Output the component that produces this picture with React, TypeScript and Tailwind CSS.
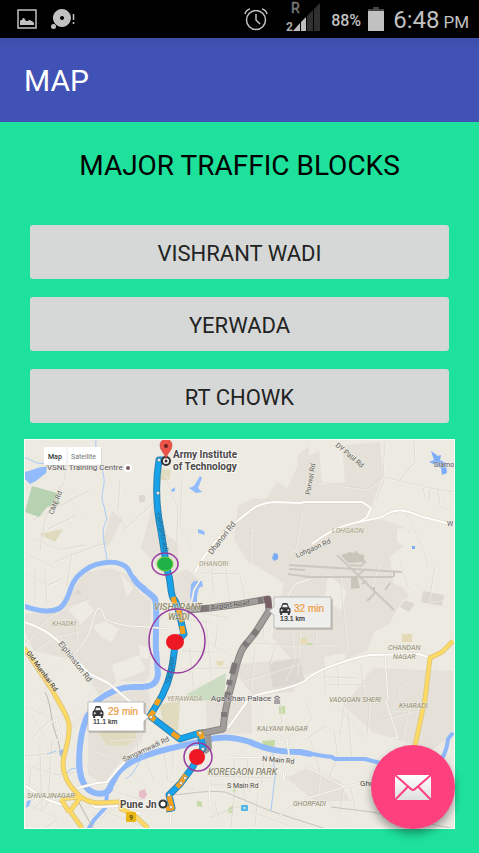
type Label = { text: string; x: number; y: number; size: number; fill?: string; rotate?: number; italic?: boolean; bold?: boolean };

const AREA = "#a09a80";
const ROAD = "#5c5c5a";

const labels: Label[] = [
  { text: "VSNL Training Centre", x: 47, y: 470, size: 8, fill: "#5b5660" },
  { text: "CME Rd", x: 53, y: 515, size: 7, fill: ROAD, rotate: -68 },
  { text: "Porwal Rd", x: 310, y: 495, size: 7, fill: ROAD, rotate: -80 },
  { text: "DY Patil Rd", x: 335, y: 446, size: 7, fill: ROAD, rotate: 40 },
  { text: "Diamo", x: 434, y: 467, size: 7, fill: "#555563" },
  { text: "Dhanori Rd", x: 212, y: 555, size: 8, fill: ROAD, rotate: -52 },
  { text: "DHANORI", x: 199, y: 566, size: 7, fill: AREA, italic: true },
  { text: "LOHGAON", x: 332, y: 533, size: 7, fill: AREA, italic: true },
  { text: "Lohgaon Rd", x: 297, y: 558, size: 7, fill: ROAD, rotate: -24 },
  { text: "W", x: 447, y: 526, size: 7, fill: ROAD },
  { text: "KHADKI", x: 52, y: 626, size: 7, fill: AREA, italic: true },
  { text: "Elphinston Rd", x: 58, y: 644, size: 8, fill: ROAD, rotate: 52 },
  { text: "Old Mumbai Rd", x: 26, y: 653, size: 7, fill: "#534a31", rotate: 54, bold: true },
  { text: "VISHARANT", x: 154, y: 610, size: 9, fill: "#8f8a6a", italic: true, bold: true },
  { text: "WADI", x: 168, y: 620, size: 9, fill: "#8f8a6a", italic: true, bold: true },
  { text: "YERAWADA", x: 167, y: 701, size: 7, fill: AREA, italic: true },
  { text: "Aga Khan Palace", x: 211, y: 701, size: 8, fill: "#56535c" },
  { text: "CHANDAN", x: 388, y: 650, size: 7, fill: "#8b876e", italic: true },
  { text: "NAGAR", x: 393, y: 659, size: 7, fill: "#8b876e", italic: true },
  { text: "VADGOAN SHERI", x: 329, y: 702, size: 7, fill: "#8b876e", italic: true },
  { text: "KHARADI", x: 399, y: 708, size: 7, fill: "#8b876e", italic: true },
  { text: "KALYANI NAGAR", x: 257, y: 731, size: 7, fill: "#8b876e", italic: true },
  { text: "Sangamwadi Rd", x: 124, y: 762, size: 7, fill: ROAD, rotate: -25 },
  { text: "KOREGAON PARK", x: 208, y: 775, size: 9, fill: "#77735b", italic: true },
  { text: "N Main Rd", x: 262, y: 761, size: 7, fill: "#4c4b49", rotate: 5 },
  { text: "S Main Rd", x: 227, y: 788, size: 7, fill: "#4c4b49" },
  { text: "SHIVAJINAGAR", x: 27, y: 798, size: 7, fill: "#8b876e", italic: true },
  { text: "GHORPADI", x: 293, y: 806, size: 7, fill: "#8b876e", italic: true },
  { text: "Ghorpadi", x: 360, y: 786, size: 8, fill: "#4c4b49" },
];

const mainRoute =
  "M166 460L159 460C156 478 156 500 159 520C163 540 165 560 168 573C171 580 170 592 173 598C178 603 180 618 184 634L175 644C173 664 171 678 162 696L150 716L180 739L200 733L203 748L192 768L180 784L169 795L172 808L166 809";
const slowParts = [
  "M173 597L175 604",
  "M178 608L182 622M182 626L183 634",
  "M156 705L159 699",
  "M154 711L150 716L155 720",
  "M172 733L179 738",
  "M197 734L201 733L202 739",
  "M186 775L180 784L177 787",
  "M169 796L172 808L166 809",
];
const altRoute =
  "M187 610L210 608L240 604L268 599L269 611L255 633L243 648C236 660 235 675 231 687C228 698 225 708 223 729L203 733";

const whiteRoads = [
  "M24 622C45 629 55 636 70 654L90 674L108 683C120 692 126 700 138 707L142 717",
  "M195 572C202 557 222 531 240 519C251 510 257 503 275 502L300 503L305 502L362 502L371 508L367 517L359 522C337 526 324 535 312 544",
  "M359 522L382 517C395 507 406 510 420 516L453 525",
  "M305 681C312 672 346 659 370 655L419 654L430 658",
  "M305 681C285 693 253 690 246 703L228 728",
  "M24 785L48 800L65 806M78 788L97 783L107 782L116 771L128 758L160 745",
  "M80 796L95 807L120 806L140 814",
];

const sideRoads = [
  "M38 680C50 668 72 660 84 642C93 630 92 616 98 608L102 610L105 619C120 627 135 626 148 627L170 629",
  "M385 656L388 700",
  "M330 704C350 712 354 727 365 738L398 738L386 701",
  "M52 722L80 708L94 690M71 728L90 707M56 719L60 738L53 744",
  "M203 757L211 758L290 757M285 759L283 780",
  "M208 760L210 807L225 826M170 812L171 828",
  "M276 819L300 800L318 795L345 787L360 783M305 766L344 787",
  "M258 698L261 729L287 740L295 732M287 740L290 763L277 798",
  "M190 609L194 590L200 580L215 575",
  "M287 598L295 584L310 579",
  "M95 827L120 801",
];

const minorRoads = [
  "M66 450L65 480L45 520L40 550M35 540L60 550L85 545M33 520L90 490M58 486L84 515M48 529L75 516M24 553L55 568",
  "M24 574L48 585L62 579M35 569L35 604M45 569L47 604M72 553L67 586M54 562L98 545L107 544",
  "M124 530L154 502L160 507M120 480L118 510L126 530",
  "M24 644L45 619L67 606L88 599M35 625L58 651M43 620L72 653M24 657L55 636L82 630",
  "M24 679L43 701L58 709M36 654L49 672L46 690M77 639L75 622",
  "M27 708L52 718L32 738M24 724L49 747M32 715L45 737M39 707L58 732M25 756L58 753M28 766L62 777M40 747L42 810M52 741L48 805",
  "M24 803L58 819L45 828M30 811L50 795M42 812L54 794",
  "M165 474L178 508L177 545M182 478L180 525L192 548M250 565L251 528L295 550L302 510",
  "M305 480L350 487L367 489L385 476M385 442L383 477L430 488L453 492M385 477L376 502",
  "M405 510L424 550L429 569M400 480L415 462L414 440M430 488L429 500M438 490L440 506L450 511M423 488L425 497",
  "M200 573L240 574L245 598M212 569L214 595M226 570L230 597M184 620L210 623M180 609L228 618",
  "M182 651L214 653M180 669L230 668M206 620L212 678M190 648L194 691M218 625L215 646M205 642L233 656",
  "M257 637L275 648L270 664M255 650L250 690M241 681L300 663M263 610L264 638M251 643L303 646",
  "M291 628L294 660L285 680M300 628L297 675M316 628L315 645L335 644M340 575L347 650",
  "M337 660L339 685M324 662L326 693M323 677L357 678M325 685L365 685M361 664L364 698",
  "M345 700L340 737M370 695L367 735M388 710L408 710L401 742M398 690L397 700M385 674L412 684",
  "M430 658L453 691M380 720L417 710M310 738L320 770L318 790M334 730L338 757L330 775L333 790M348 713L352 759",
  "M305 740L325 726L340 734M306 700L312 718L305 728M280 698L282 724M250 700L250 725",
  "M173 753L173 770M164 751L168 781L194 790M208 776L270 778M234 757L235 789M247 757L250 792M264 759L262 784",
  "M211 785L243 785L248 812M215 803L220 821M235 789L231 828M258 793L255 826M210 818L237 807L290 826",
  "M283 774L333 806L350 827M344 787L340 812M350 784L357 817M380 560L370 590M435 566L429 601L443 600M401 563L409 590",
  "M110 740L137 738L138 750M87 765L98 778M95 751L112 755M145 758L154 780",
  "M55 775L82 772M31 770L28 796M94 812L98 825M105 812L144 827M109 790L145 801M124 770L155 794",
];

const rivers = [
  { d: "M24 606C35 610 49 614 60 608C71 599 68 586 78 576C85 569 94 564 103 563C116 561 123 563 128 569C132 578 137 584 144 588", w: 5 },
  { d: "M134 579C138 587 151 593 155 599C158 610 155 630 156 650L158 674C157 688 145 687 133 687C118 687 106 694 97 701C87 712 82 726 80 746C78 765 79 778 86 787C92 795 105 796 110 789", w: 6 },
  { d: "M108 791L117 774C127 761 144 756 160 751C177 747 188 744 203 741C222 735 237 738 250 742C265 749 277 752 300 752L310 754", w: 6 },
  { d: "M300 752L324 756L332 757L335 759L365 759L380 763C399 769 419 776 433 769C444 760 447 750 448 739L452 734", w: 4 },
];

const streams = [
  "M24 457L37 463L48 464L56 459",
  "M96 440C94 453 102 464 104 478C105 490 99 495 104 506L107 520C99 530 106 548 107 560",
  "M144 755L132 774L126 779M56 751L47 754M64 775L71 769L76 768",
  "M273 754L275 777L271 810",
];

const yellowRoads = [
  "M24 648L53 691C57 701 68 714 69 725C70 741 64 751 63 763C63 779 72 789 81 797C94 807 105 801 121 802L121 809L133 814L148 828",
  "M81 797L70 811L82 828M61 799L69 812M61 799L80 797M453 641L442 652L430 658L425 699L415 746",
];

function Car({ x, y }: { x: number; y: number }) {
  return (
    <g transform={`translate(${x} ${y})`}>
      <path d="M2 4.5L3.2 1Q3.5 0 4.5 0H7.5Q8.5 0 8.8 1L10 4.5Q11.5 4.7 11.5 6.5V10H10.8V12H8.8V10H3.2V12H1.2V10H.5V6.5Q.5 4.7 2 4.5Z" fill="#38383a" />
      <path d="M3.3 4.3L4 1.7H8L8.7 4.3Z" fill="#eee" />
      <circle cx="2.8" cy="7.3" r="1" fill="#eee" />
      <circle cx="9.2" cy="7.3" r="1" fill="#eee" />
    </g>
  );
}

function TrafficMap() {
  return (
    <svg viewBox="24 439 431 390" className="block w-full" role="img" aria-label="Traffic map of Pune" fontFamily="Roboto, sans-serif">
      <rect x="24" y="439" width="431" height="390" fill="#edeae2" />
      <g fill="#e5e1d9">
        <path d="M58 611L73 590L84 573L110 568L127 575L139 592L151 601L150 674L145 682L118 681L99 695L78 661L34 651L24 630V614Z" />
        <path d="M238 506L251 499L267 498L277 481L287 489L296 469L310 455L332 446L380 442L383 476L367 518L388 521L410 530L407 544L390 556L393 582L400 604L389 624L374 632L367 651L305 675L272 637L284 583L247 560L234 540Z" />
        <path d="M298 455L309 446V480L295 500Z M112 510L122 520L108 547L102 543Z M154 500L168 536L178 543L179 567L166 577L141 548Z" />
        <path d="M169 576L187 569L199 580L192 607L176 604Z M229 665L297 658L294 692L252 694Z" />
        <path d="M100 698L149 687L150 713L141 742L117 765L103 785L88 774L88 732Z" />
        <path d="M206 701L252 700L252 733L207 735Z M373 668L453 671V735L432 750L373 732L344 706Z" />
        <path d="M305 769L340 781L350 801L316 801L286 778Z M390 582L402 587L409 596L397 607L389 598Z" />
      </g>
      <g fill="#eeebe3">
        <path d="M319 446H342L345 482L322 484Z M328 575L347 591L341 610L324 601Z M402 599L410 603L403 612Z M93 626L105 621L119 629L112 642L101 637Z M139 644L150 648L148 659L140 657Z M397 529L408 528L411 550L397 542Z M324 657L345 653L345 677L326 681Z" />
        <path d="M68 609L86 601L94 611L81 624Z M120 573L134 588L127 597Z M112 665L139 655L146 670L116 682Z M306 717L318 724L309 733L329 733L333 745L322 749L306 743Z" />
      </g>
      <g fill="#dcd7d0">
        <path d="M269 663L300 658L305 682L273 688Z M405 600L415 604L409 612L400 607Z M423 591L444 595L442 606L421 602Z M139 495L145 495V502L139 502Z M76 590L81 590V595L76 595Z" />
      </g>
      <path d="M32 486L57 493L60 504L47 507L39 517L25 512Z" fill="#b7d2b1" />
      <path d="M187 694L226 673L224 701L190 700Z" fill="#cbdcc2" />
      <path d="M39 534L63 529L55 542Z M99 734L107 725L134 728L137 739L125 746L107 745Z M160 704L180 701L178 731L163 728Z M159 469L171 470L169 480H158Z" fill="#e0dabf" />
      <path d="M307 643L313 643L312 645L307 645Z M279 706H285V714H279Z M262 741L275 740L274 748L265 748Z M197 801L202 802V807L197 806Z M228 809L233 805V813H228Z M232 791L236 788V793Z" fill="#c5d9a4" />
      <path d="M402 634H412V642H402Z M216 661L224 661L222 666L217 665Z M300 638L307 637V644H300Z" fill="#e4dab6" />
      <path d="M139 791L145 789L147 795L144 799L139 797Z" fill="#e5bec9" />

      <g fill="none" stroke="#dcd8d0" strokeWidth="1" strokeOpacity=".8">
        {minorRoads.map((d) => <path key={d} d={d} />)}
      </g>
      <g fill="none" stroke="#f6f4ee" strokeWidth="1" strokeOpacity=".5">
        {minorRoads.map((d) => <path key={d} d={d} transform="translate(1 1)" />)}
      </g>

      <g fill="none" stroke="#cdc8bf" strokeWidth="2">
        <path d="M289 565L402 572M305 577L393 577M289 569L305 570M288 574L310 577M337 555L394 610M365 569L353 580M394 572V577" />
        <path d="M344 556L350 560L356 552L365 562L361 566L350 565M362 584L367 581M367 601L374 594L374 587M385 590L390 583" />
      </g>
      <path d="M341 555L350 552L364 555V562L348 563Z M351 577L357 576L360 588L351 589Z" fill="#cac5bb" />

      <g fill="none" strokeLinejoin="round" strokeLinecap="round">
        {rivers.map((r) => <path key={r.d} d={r.d} stroke="#8eb8fa" strokeWidth={r.w} />)}
        {streams.map((d) => <path key={d} d={d} stroke="#a9caf5" strokeWidth="1" />)}
        <path d="M107 792L106 807L94 820L89 828" stroke="#8eb8fa" strokeWidth="4" />
      </g>
      <g fill="#91bbfc">
        <path d="M24 472C34 471 37 466 47 467L46 473L36 481L30 484L24 478Z" />
        <path d="M189 488L194 486L200 476L202 478L198 488L202 492L196 493Z M171 490L175 487L175 491L172 492Z M198 529L204 531L205 535L198 533Z" />
        <path d="M190 597L191 584L194 581L202 581L203 586L199 588L197 596L197 602L191 602Z" />
        <path d="M431 451L438 456L441 455L440 460L446 463L447 473L442 475L441 468L436 465L429 462L434 460Z M412 546H415V549H412Z M274 553L278 554V559L274 561L272 558Z" fill="#7bacf7" />
        <path d="M59 751L63 749L66 753L60 756Z M27 801L31 800L29 806L26 808Z" />
      </g>

      <g fill="none" strokeLinejoin="round">
        <path d="M45 692C52 704 50 723 58 740L64 770L73 792L93 828" stroke="#bbb8b1" strokeWidth="1" />
        <path d="M170 795C192 794 203 790 225 792L268 810L326 829M331 807L372 812L455 829" stroke="#c6c3bc" strokeWidth="1" />
        {sideRoads.map((d) => <path key={d} d={d} stroke="#dedad2" strokeWidth="2" />)}
        {sideRoads.map((d) => <path key={d} d={d} stroke="#fbfaf6" strokeWidth="1" />)}
        {whiteRoads.map((d) => <path key={d} d={d} stroke="#dad6ce" strokeWidth="3" />)}
        {whiteRoads.map((d) => <path key={d} d={d} stroke="#fffefa" strokeWidth="2" />)}
        {yellowRoads.map((d) => <path key={d} d={d} stroke="#e2c878" strokeWidth="5" />)}
        {yellowRoads.map((d) => <path key={d} d={d} stroke="#ffdb63" strokeWidth="3" />)}
      </g>

      <g fill="none" strokeLinejoin="round">
        <path d="M201 732L208 733L209 748L204 752" stroke="#9b9998" strokeWidth="6" />
        <path d={altRoute} stroke="#878482" strokeWidth="7" />
        <path d={altRoute} stroke="#a09d9b" strokeWidth="5" />
        <path d="M200 609L209 608M258 601L263 600M257 630L253 635M247 642L244 646M235 663L232 674M230 680L229 685M228 692L227 698M224 712L224 717" stroke="#7f7a79" strokeWidth="6" />
        <path d="M264 600L268 599L269 608" stroke="#786065" strokeWidth="6" />
        <path d={mainRoute} stroke="#2a80b0" strokeWidth="7" />
        <path d={mainRoute} stroke="#17a2ea" strokeWidth="5" />
        {slowParts.map((d) => <path key={d} d={d} stroke="#f6a01c" strokeWidth="5" />)}
      </g>
      <g fill="#fff" stroke="#7f7961" strokeWidth=".5">
        <circle cx="159" cy="460" r="1.5" /><circle cx="158" cy="493" r="1.5" /><circle cx="151" cy="717" r="1.5" />
        <circle cx="200" cy="733" r="1.5" /><circle cx="203" cy="749" r="1.5" /><circle cx="185" cy="778" r="1.5" />
        <circle cx="181" cy="783" r="1.5" /><circle cx="169" cy="795" r="1.5" /><circle cx="171" cy="807" r="1.5" />
      </g>

      <rect x="126" y="812" width="10" height="10" rx="1" fill="#e9b714" />
      <text x="131" y="820" fontSize="7" fontWeight="700" textAnchor="middle" fill="#5c4a10">9</text>
      <rect x="241" y="805" width="7" height="6" rx="1" fill="#51b6e5" />
      <path d="M243 808H246" stroke="#fff" />

      <g stroke="#f4f1e8" strokeWidth="1" strokeOpacity=".7" paintOrder="stroke">
        {labels.map((l) => (
          <text
            key={l.text}
            x={l.x}
            y={l.y}
            fontSize={l.size}
            fill={l.fill}
            fontStyle={l.italic ? "italic" : undefined}
            fontWeight={l.bold ? 500 : undefined}
            transform={l.rotate ? `rotate(${l.rotate} ${l.x} ${l.y})` : undefined}
          >
            {l.text}
          </text>
        ))}
        <text x="211" y="610" fontSize="7" fill="#444" strokeOpacity=".4" transform="rotate(-8 211 610)">Airport Road</text>
      </g>
      <g fontSize="7" fill="#2f6584">
        <text x="156" y="512" transform="rotate(79 156 512)">Vishrantwadi</text>
        <text x="170" y="684" transform="rotate(-79 170 684)">Vadgaon</text>
      </g>
      <path d="M274 698L277 696L280 698M275 699H279M275 700V702M277 700V702M279 700V702M274 703H280" fill="none" stroke="#665d68" strokeWidth="1" />
      <circle cx="128" cy="468" r="4" fill="#fff" />
      <circle cx="128" cy="468" r="2" fill="#7d5e5c" />

      <g>
        <rect x="45" y="448" width="57" height="18" fill="#c9c5bd" opacity=".4" />
        <rect x="44" y="447" width="57" height="18" rx="1" fill="#fff" />
        <path d="M67 447V465" stroke="#e5e5e5" />
        <text x="48" y="459" fontSize="7" fontWeight="500" fill="#333">Map</text>
        <text x="71" y="459" fontSize="7" fill="#777">Satellite</text>
      </g>

      <circle cx="166" cy="461" r="4" fill="#fff" stroke="#343434" strokeWidth="2" />
      <circle cx="166" cy="461" r="1.5" fill="#343434" />
      <path d="M166 459C165 453 160 451 160 445A6 6 0 0 1 172 445C172 451 167 453 166 459Z" fill="#ed5449" stroke="#b83834" strokeWidth=".5" />
      <circle cx="166" cy="446" r="2" fill="#682222" />
      <g stroke="#fff" strokeWidth="2" strokeOpacity=".7" paintOrder="stroke" fill="#4b4949" fontSize="10" fontWeight="700">
        <text x="173" y="458">Army Institute</text>
        <text x="173" y="470">of Technology</text>
        <text x="120" y="808">Pune Jn</text>
      </g>
      <circle cx="163" cy="804" r="3.5" fill="#fff" stroke="#333" strokeWidth="2" />

      <g fill="none" stroke="#983ba0" strokeWidth="1.5">
        <ellipse cx="165" cy="564" rx="13" ry="11" />
        <ellipse cx="177" cy="641" rx="28" ry="32" />
        <circle cx="198" cy="757" r="14" />
      </g>
      <ellipse cx="165" cy="564" rx="8" ry="7" fill="#20b247" stroke="#77cb36" />
      <ellipse cx="175" cy="642" rx="9" ry="8" fill="#ee1824" />
      <circle cx="197" cy="757" r="8" fill="#ee1824" />

      <path d="M276 599H333V630H276Z M89 703H146V733H89Z" fill="#77736d" opacity=".3" />
      <path d="M274 597H331V628H274V615L269 611L274 607Z" fill="#eeeeed" stroke="#aaa8a4" strokeWidth=".7" />
      <path d="M88 702H144V713L149 717L144 721V731H88Z" fill="#fff" stroke="#aaa8a4" strokeWidth=".7" />
      <Car x={279} y={603} />
      <Car x={92} y={706} />
      <g fontSize="10" fill="#ed9b3e" stroke="#ed9b3e" strokeWidth=".2" fontFamily="Liberation Sans, sans-serif">
        <text x="294" y="612">32 min</text>
        <text x="108" y="715">29 min</text>
      </g>
      <g fontSize="7" fill="#333" stroke="#333" strokeWidth=".2" fontFamily="Liberation Sans, sans-serif">
        <text x="280" y="621">13.1 km</text>
        <text x="93" y="724">11.1 km</text>
      </g>
      <rect x="24.5" y="439.5" width="430" height="389" fill="none" stroke="#fbfaf6" />
    </svg>
  );
}

function StatusBar() {
  return (
    <header className="flex h-[38px] items-center justify-between bg-black pr-[10px] pl-[17px] text-[#c1c1c1]">
      <div className="flex items-center gap-[14px]">
        <svg width="20" height="20" viewBox="0 0 20 20" aria-label="Screenshot saved">
          <rect x="1" y="1" width="18" height="18" fill="none" stroke="currentColor" strokeWidth="1.5" />
          <path d="M3 16V12L4 11L5 11L6 9L7 9L9 12H11L12 11H13L14 12H15L17 14V16Z" fill="currentColor" />
        </svg>
        <svg width="26" height="22" viewBox="0 0 26 22" aria-label="Notification">
          <path fillRule="evenodd" d="M11 1A9 9 0 1 1 10.9 1ZM11 8A2 2 0 1 0 11.1 8Z" fill="currentColor" />
          <circle cx="2.5" cy="18.5" r="2.5" fill="currentColor" />
          <path d="M22.5 6V12M22.5 14V16" stroke="currentColor" strokeWidth="1.5" />
        </svg>
      </div>
      <div className="flex h-full items-center">
        <svg width="26" height="26" viewBox="0 0 26 26" fill="none" stroke="currentColor" strokeWidth="1.5" className="mr-[17px]" aria-label="Alarm set">
          <circle cx="13" cy="14" r="9.5" />
          <path d="M13 8V14L17 18M2 8Q3 4 7 3M24 8Q23 4 19 3" />
        </svg>
        <svg width="35" height="38" viewBox="0 0 35 38" className="mr-[10px]" aria-label="Mobile signal, roaming">
          <path d="M34 3V31H28V9ZM27 10V31H21V16Z" fill="#303030" />
          <path d="M20 17V31H15V22Z" fill="#bcbcbc" />
          <path d="M14 23V31H7Z" fill="#bcbcbc" />
          <text x="5" y="13" fontSize="14" fill="#777" stroke="#777" strokeWidth=".5" fontFamily="Roboto, sans-serif">R</text>
          <text x="0" y="31" fontSize="12" fontWeight="700" fill="#aaa" fontFamily="Roboto, sans-serif">2</text>
        </svg>
        <span className="mr-[7px] pt-[3px] text-[16px] leading-5 font-medium">88%</span>
        <svg width="16" height="24" viewBox="0 0 16 24" className="mr-[9px]" aria-label="Battery">
          <path d="M5 0H11V2H16V5H0V2H5Z" fill="#444" />
          <rect y="4" width="16" height="20" fill="#c1c1c1" />
        </svg>
        <time className="flex items-baseline gap-1 pt-[3px] leading-7">
          <span className="text-[24px]">6:48</span>
          <span className="text-[17px]">PM</span>
        </time>
      </div>
    </header>
  );
}

const places = ["VISHRANT WADI", "YERWADA", "RT CHOWK"];

export default function App() {
  return (
    <div className="flex min-h-screen flex-col bg-[#1ee19b] font-[Roboto,sans-serif]">
      <StatusBar />
      <div className="flex h-[84px] items-center bg-linear-to-b from-[#3c4dab] to-[#4052b5] to-15% px-6">
        <h1 className="pt-[2px] text-[30px] leading-9 text-white">MAP</h1>
      </div>
      <main className="relative flex-1 p-6">
        <h2 className="text-center text-[28px] leading-10 text-black">MAJOR TRAFFIC BLOCKS</h2>
        <div className="mt-[39px] flex flex-col gap-[18px] px-[6px]">
          {places.map((place) => (
            <button key={place} type="button" className="h-[54px] rounded-[3px] bg-[#d6d8d7] pt-[2px] text-[22px] text-[#222323]">
              {place}
            </button>
          ))}
        </div>
        <div className="mt-4">
          <TrafficMap />
        </div>
        <button
          type="button"
          aria-label="Send message"
          className="absolute right-6 bottom-6 flex size-[84px] items-center justify-center rounded-full bg-[#ff407f] shadow-[0_5px_9px_rgba(0,0,0,0.35)]"
        >
          <svg width="36" height="25" viewBox="0 0 36 25">
            <defs>
              <linearGradient id="paper" x1="0" y1="0" x2="0" y2="1">
                <stop stopColor="#fff" />
                <stop offset="1" stopColor="#dedede" />
              </linearGradient>
            </defs>
            <rect width="36" height="25" rx="1" fill="url(#paper)" />
            <path d="M0 0L16 14Q18 16 20 14L36 0M0 25L13 11.5M36 25L23 11.5" fill="none" stroke="#ff407f" strokeWidth="2" />
          </svg>
        </button>
      </main>
    </div>
  );
}
